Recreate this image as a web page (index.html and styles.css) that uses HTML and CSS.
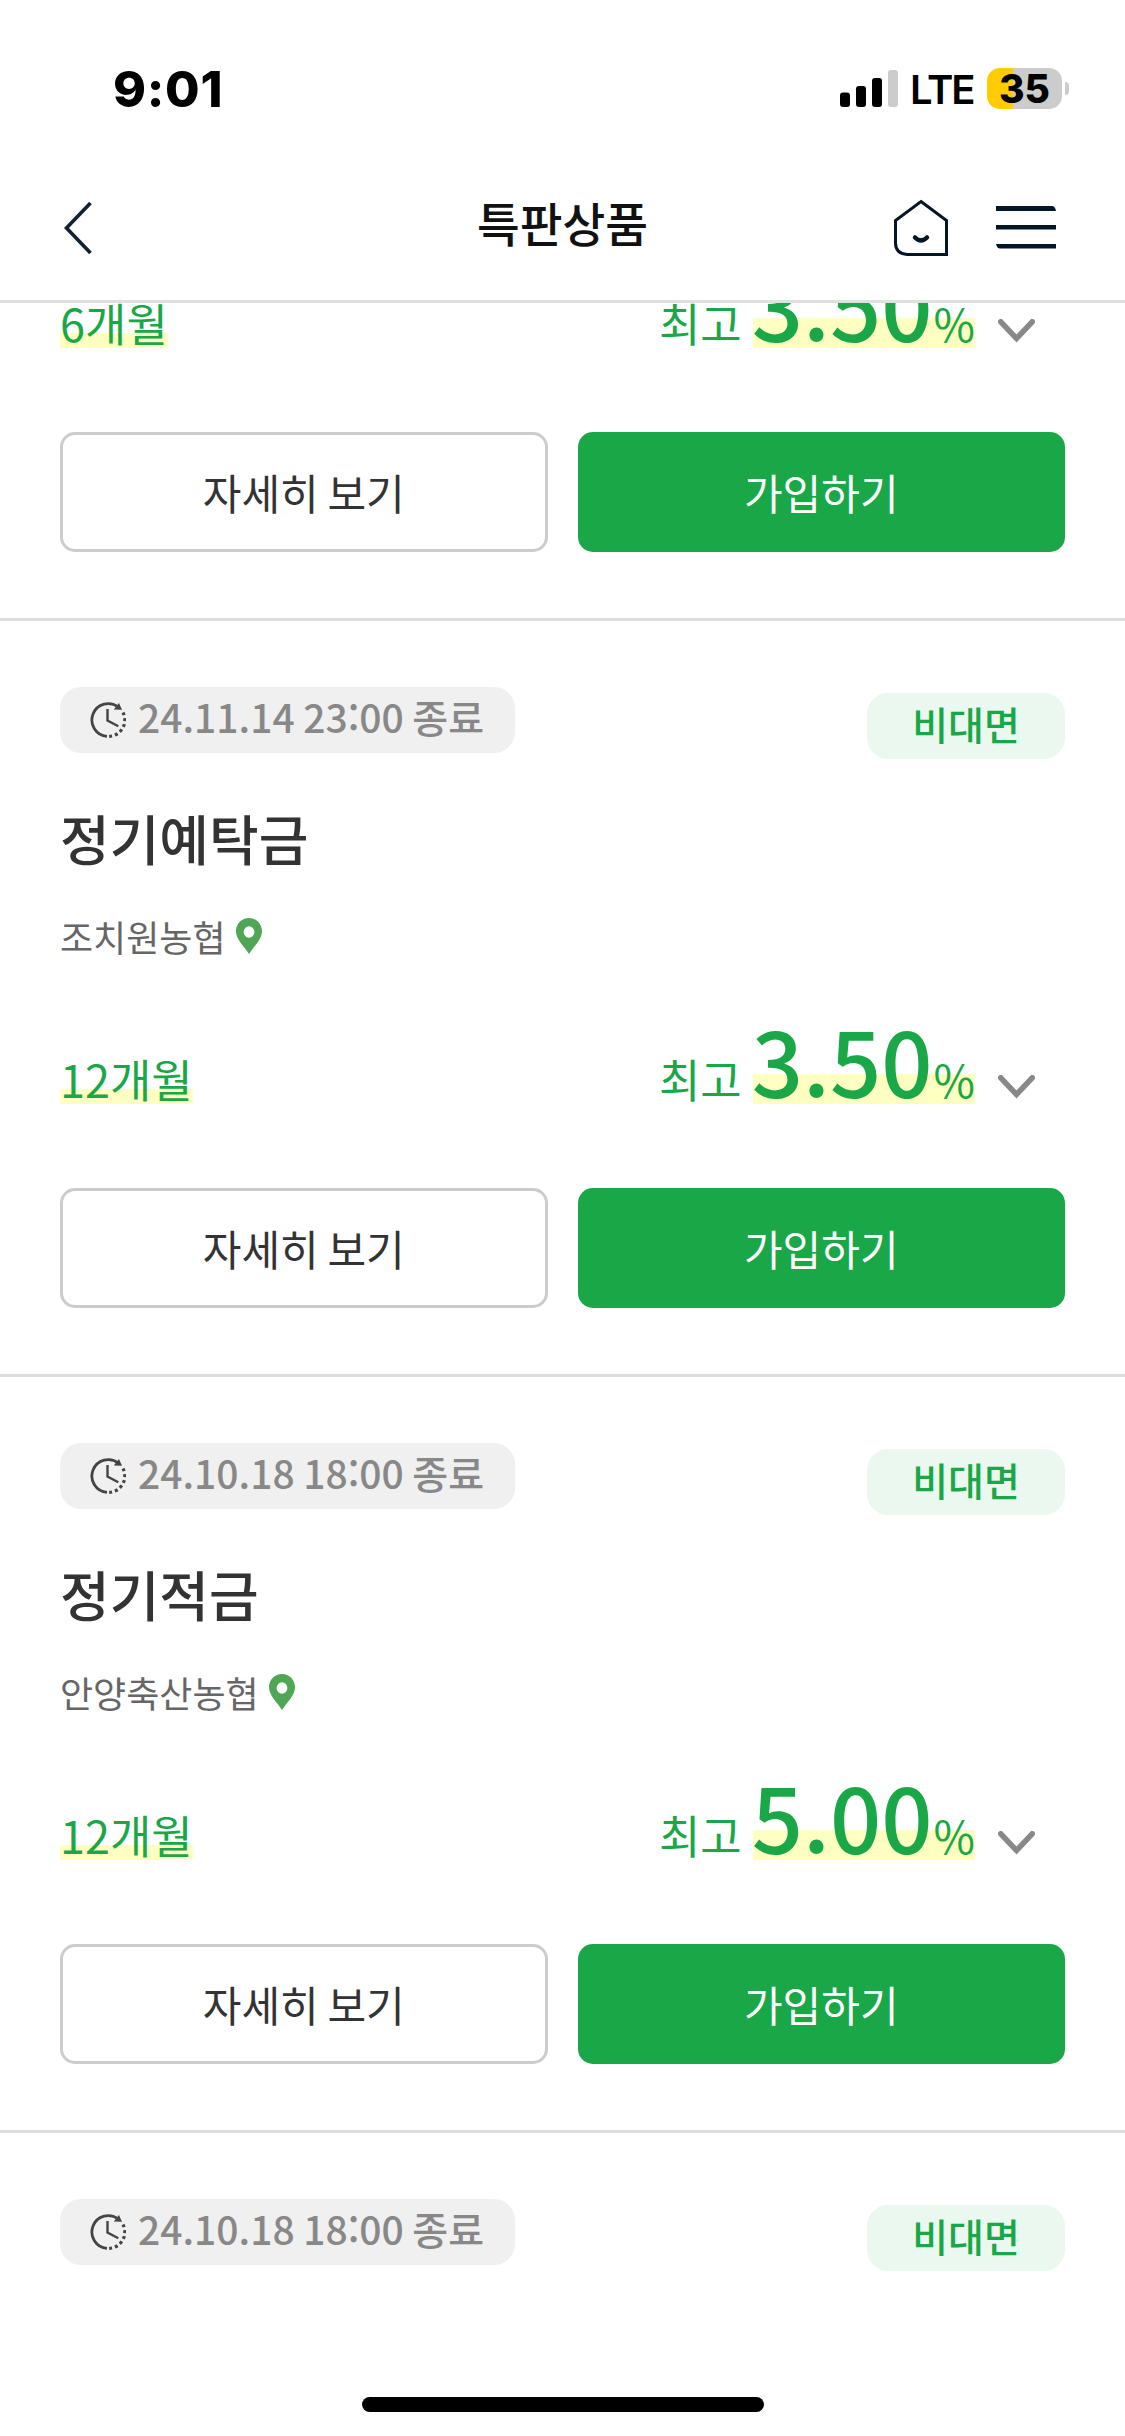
FILE: index.html
```html
<!DOCTYPE html>
<html lang="ko">
<head>
<meta charset="utf-8">
<title>특판상품</title>
<link rel="stylesheet" href="styles.css">
</head>
<body>
<svg width="0" height="0" class="defs" aria-hidden="true">
  <symbol id="clock" viewBox="0 0 36 36">
    <g fill="none" stroke="#444" stroke-width="2.8">
      <path d="M17 34.400A16.400 16.400 0 1 1 28.500 5.200"/>
      <path d="M17.500 7V18.500L28.300 24.200" stroke-width="2.400"/>
      <path d="M33 10.500A16.400 16.400 0 0 1 19 34.400" stroke-width="3.200" stroke-dasharray="3 2.900"/>
    </g>
    <path d="M29 1L32 7.800L23.800 7.400Z" fill="#444"/>
  </symbol>
  <symbol id="pin" viewBox="0 0 26 36">
    <path fill="#4fa654" fill-rule="evenodd" d="M13 0C5.800 0 0 5.800 0 13.200C0 21 7 27 13 36C19 27 26 21 26 13.200C26 5.800 20.200 0 13 0ZM13 8.200A5.400 5.800 0 1 1 13 19.800A5.400 5.800 0 1 1 13 8.200Z"/>
  </symbol>
  <symbol id="chevron" viewBox="0 0 37 24">
    <path d="M2.800 2.800L18.500 19.500L34.200 2.800" fill="none" stroke="#888" stroke-width="5.600" stroke-linecap="round"/>
  </symbol>
</svg>

<div class="screen">
  <div class="status">
    <span class="time">9:01</span>
    <div class="status-right">
      <svg class="signal" width="58" height="37" viewBox="0 0 58 37">
        <rect x="0" y="22.500" width="10" height="14.500" rx="3"/>
        <rect x="16" y="16" width="10" height="21" rx="3"/>
        <rect x="32" y="8" width="10" height="29" rx="3"/>
        <rect x="48" y="0" width="10" height="37" rx="3" fill="#ccc"/>
      </svg>
      <span class="network">LTE</span>
      <span class="battery">35</span>
      <span class="battery-tip"></span>
    </div>
  </div>

  <header class="header">
    <svg class="back" width="30" height="54" viewBox="0 0 30 54"><path d="M27.500 2L3.500 27L27.500 52" fill="none" stroke="#112233" stroke-width="3.600"/></svg>
    <h1 class="page-title">특판상품</h1>
    <div class="tools">
      <svg width="54" height="58" viewBox="0 0 54 58" fill="none" stroke="#041526" stroke-width="3">
        <path d="M27 2.500L52.500 21.500V55.500H13Q1.500 54.500 1.500 44V21.500Z"/>
        <path d="M21 38.500Q27 44.500 33 38.500" stroke-width="4.500" stroke-linecap="round"/>
      </svg>
      <svg width="60" height="43" viewBox="0 0 60 43" fill="#041526">
        <path d="M0 0H56Q59 0 60 5H0Z"/>
        <path d="M0 19H60V23.500H0Z"/>
        <path d="M0 38H60V42.500H4Q1 42.500 0 38Z"/>
      </svg>
    </div>
  </header>

  <main class="list">
    <section class="card card-scrolled">
      <div class="terms">
        <span class="period">6개월</span>
        <div class="rate"><span class="rate-label">최고</span><span class="rate-value"><b class="number">3.50</b>%</span></div>
        <svg class="chevron"><use href="#chevron"/></svg>
      </div>
      <div class="actions"><button class="btn">자세히 보기</button><button class="btn btn-primary">가입하기</button></div>
    </section>

    <section class="card">
      <div class="tags">
        <span class="deadline"><svg class="clock"><use href="#clock"/></svg><span class="deadline-text">24.11.14 23:00 종료</span></span>
        <span class="channel">비대면</span>
      </div>
      <h2 class="name">정기예탁금</h2>
      <p class="branch">조치원농협<svg class="pin"><use href="#pin"/></svg></p>
      <div class="terms">
        <span class="period">12개월</span>
        <div class="rate"><span class="rate-label">최고</span><span class="rate-value"><b class="number">3.50</b>%</span></div>
        <svg class="chevron"><use href="#chevron"/></svg>
      </div>
      <div class="actions"><button class="btn">자세히 보기</button><button class="btn btn-primary">가입하기</button></div>
    </section>

    <section class="card">
      <div class="tags">
        <span class="deadline"><svg class="clock"><use href="#clock"/></svg><span class="deadline-text">24.10.18 18:00 종료</span></span>
        <span class="channel">비대면</span>
      </div>
      <h2 class="name">정기적금</h2>
      <p class="branch">안양축산농협<svg class="pin"><use href="#pin"/></svg></p>
      <div class="terms">
        <span class="period">12개월</span>
        <div class="rate"><span class="rate-label">최고</span><span class="rate-value"><b class="number">5.00</b>%</span></div>
        <svg class="chevron"><use href="#chevron"/></svg>
      </div>
      <div class="actions"><button class="btn">자세히 보기</button><button class="btn btn-primary">가입하기</button></div>
    </section>

    <section class="card card-last">
      <div class="tags">
        <span class="deadline"><svg class="clock"><use href="#clock"/></svg><span class="deadline-text">24.10.18 18:00 종료</span></span>
        <span class="channel">비대면</span>
      </div>
    </section>
  </main>
  <div class="home-indicator"></div>
</div>
</body>
</html>
```
FILE: styles.css
```css
* { box-sizing: border-box; margin: 0; padding: 0; }

body {
  background: #fff;
  color: #333;
  font-family: "Noto Sans CJK KR", sans-serif;
}

svg { display: block; flex: none; }
.defs { position: absolute; }

.screen {
  display: flex;
  flex-direction: column;
  width: 1125px;
  height: 2436px;
  overflow: hidden;
}

/* Status bar */
.status {
  display: flex;
  justify-content: space-between;
  flex: none;
  height: 156px;
  padding: 68px 56px 0 113px;
  color: #000;
  font-family: Inter, sans-serif;
}
.time { font-size: 50px; font-weight: 800; line-height: 42px; letter-spacing: 0.7px; }
.status-right { display: flex; align-items: flex-start; }
.signal { margin-top: 2px; }
.network {
  width: 77px;
  margin-left: 12px;
  font-size: 40px;
  font-weight: 600;
  line-height: 44px;
  letter-spacing: -2px;
}
.battery {
  width: 75px;
  height: 41px;
  border-radius: 13px;
  background: linear-gradient(90deg, #ffcc00 26px, #ccc 26px);
  font-size: 39px;
  font-weight: 800;
  line-height: 42px;
  text-align: center;
}
.battery-tip {
  width: 4px;
  height: 13px;
  margin: 14px 0 0 3px;
  border-radius: 0 4px 4px 0;
  background: #ccc;
}

/* App header */
.header {
  display: grid;
  grid-template-columns: 1fr auto 1fr;
  align-items: center;
  flex: none;
  height: 147px;
  padding: 0 69px 1px;
  border-bottom: 3px solid #e0e0e0;
  background: #fff;
  position: relative;
  z-index: 1;
}
.back { margin-left: -6px; }
.page-title {
  margin-bottom: 12px;
  color: #111;
  font-size: 46.5px;
  font-weight: 500;
  line-height: 60px;
}
.tools { display: flex; justify-content: flex-end; align-items: center; gap: 48px; }

/* Product cards */
.list { flex: 1; min-height: 0; }
.card {
  display: flex;
  flex-direction: column;
  height: 756px;
  padding: 66px 60px 0;
  border-bottom: 3px solid #ddd;
}
.card-scrolled { height: 363px; margin-top: -45px; padding-top: 0; }
.card-last { height: auto; border-bottom: 0; }

.tags { display: flex; justify-content: space-between; height: 72px; }
.deadline, .channel {
  display: flex;
  align-items: center;
  height: 66px;
  border-radius: 21px;
  font-size: 39px;
  font-weight: 500;
  line-height: 60px;
}
.deadline {
  gap: 12px;
  width: 455px;
  padding: 0 0 0 30px;
  background: #f0f0f0;
  color: #888;
  white-space: nowrap;
  word-spacing: -2.4px;
}
.deadline-text { margin-bottom: 9px; }
.clock { width: 36px; height: 36px; }
.channel {
  align-self: flex-end;
  justify-content: center;
  width: 198px;
  padding-bottom: 6px;
  background: #eaf8f0;
  color: #1aa747;
}

.name { margin: 49px 0 2px; font-size: 54px; font-weight: 500; line-height: 60px; }
.branch {
  display: flex;
  align-items: center;
  gap: 10px;
  height: 36px;
  margin-top: 48px;
  color: #666;
  font-size: 36px;
  line-height: 36px;
}
.pin { width: 26px; height: 36px; }

.terms {
  display: flex;
  align-items: flex-end;
  height: 90px;
  margin-top: 60px;
  color: #1aa747;
  font-size: 45px;
}
.card-scrolled .terms { margin-top: 0; }
.period, .rate-value { background: linear-gradient(#ffffc2, #ffffc2) no-repeat bottom; }
.period { line-height: 51px; background-size: 100% 15px; }
.rate { display: flex; align-items: baseline; margin-left: auto; line-height: 1; }
.rate-label { margin-right: 11px; }
.rate-value { height: 90px; background-size: 100% 30px; }
.number { margin: 0 1px 0 -1px; font-size: 90px; font-weight: 500; line-height: 90px; }
.chevron { width: 37px; height: 24px; margin: 0 30px 5px 23px; }

.actions { display: flex; gap: 30px; margin-top: 84px; }
.btn {
  flex: 1;
  height: 120px;
  border: 3px solid #ccc;
  border-radius: 15px;
  background: #fff;
  color: #333;
  font: 400 42px/60px "Noto Sans CJK KR", sans-serif;
  word-spacing: -3px;
}
.btn-primary { border-color: #1aa747; background: #1aa747; color: #fff; }

.home-indicator {
  flex: none;
  align-self: center;
  width: 402px;
  height: 15px;
  margin-bottom: 24px;
  border-radius: 8px;
  background: #000;
}
```
